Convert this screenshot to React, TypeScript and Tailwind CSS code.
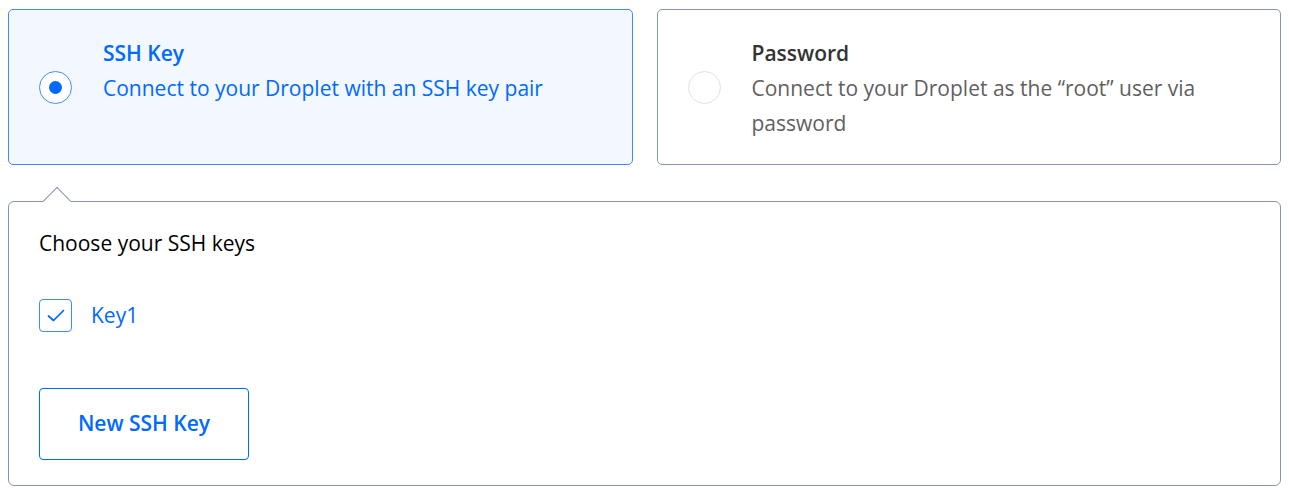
import React from "react";

const font = { fontFamily: "'Open Sans', 'Noto Sans', sans-serif" };

const Radio = ({ checked }: { checked: boolean }) => (
    <div
        className={
            "mt-[35px] flex h-[33px] w-[33px] shrink-0 items-center justify-center rounded-full border bg-white " +
            (checked ? "border-[#3f8bff]" : "border-[#e2e2e2]")
        }
    >
        {checked && <div className="h-[13px] w-[13px] rounded-full bg-[#0069ff]" />}
    </div>
);

export default function App() {
    return (
        <div className="px-2 pt-[9px] text-[21px]" style={font}>
            <div className="grid grid-cols-2 gap-6">
                {/* SSH key option */}
                <div className="flex gap-[31px] rounded-[5px] border border-[#3f8bff] bg-[#f3f8ff] pl-[30px] pr-[30px] pt-[26px] pb-[23px]">
                    <Radio checked />
                    <div className="leading-[35px] text-[#0069ff]">
                        <div className="font-semibold">SSH Key</div>
                        <div>Connect to your Droplet with an SSH key pair</div>
                    </div>
                </div>

                {/* Password option */}
                <div className="flex gap-[31px] rounded-[5px] border border-[#8794b5] bg-white pl-[30px] pr-[30px] pt-[26px] pb-[23px]">
                    <Radio checked={false} />
                    <div className="leading-[35px]">
                        <div className="font-semibold text-[#333333]">Password</div>
                        <div className="text-[#5f5f5f]">
                            Connect to your Droplet as the “root” user via password
                        </div>
                    </div>
                </div>
            </div>

            <div className="relative mt-[36px] rounded-[6px] border border-[#8794b5] bg-white px-[30px] pt-[24px] pb-[25px]">
                <div className="absolute left-[38px] top-[-11px] h-5 w-5 rotate-45 border-l border-t border-[#8794b5] bg-white" />
                <div className="leading-[35px] text-black">Choose your SSH keys</div>

                <label className="mt-[38px] flex items-center gap-[19px]">
                    <span className="flex h-[33px] w-[33px] items-center justify-center rounded-[4px] border border-[#3f8bff] bg-white">
                        <svg width="18" height="13" viewBox="0 0 18 13" fill="none">
                            <path d="M1.5 7 L6.5 11.5 L16.5 1.5" stroke="#0069ff" strokeWidth="1.7" strokeLinecap="round" strokeLinejoin="round" />
                        </svg>
                    </span>
                    <span className="text-[#0069ff]">Key1</span>
                </label>

                <button className="mt-[56px] h-[72px] w-[210px] rounded-[4px] border border-[#0069ff] bg-white font-semibold text-[#0069ff]">
                    New SSH Key
                </button>
            </div>
        </div>
    );
}
